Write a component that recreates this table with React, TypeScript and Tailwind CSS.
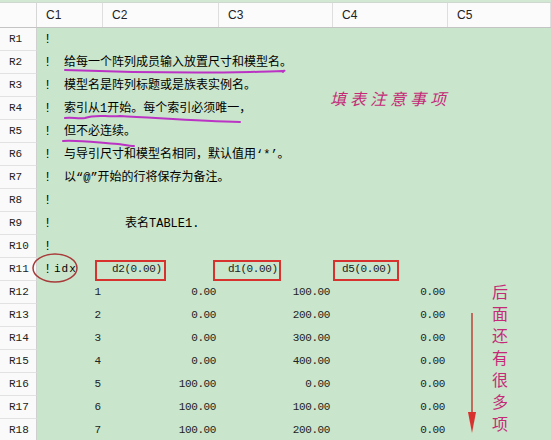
import React from "react";

const grid = "grid grid-cols-[37px_66px_116px_114px_115px_1fr]";
const cjk = "font-['Liberation_Mono','Noto_Sans_CJK_SC',monospace]";
const mono = "font-['Liberation_Mono',monospace]";
const cjkSans = "font-['Noto_Sans_CJK_SC',sans-serif]";

type Row = { note?: string; noteCls?: string; idx?: string; vals?: string[]; head?: boolean };

const rows: Row[] = [
  {},
  { note: "给每一个阵列成员输入放置尺寸和模型名。" },
  { note: "模型名是阵列标题或是族表实例名。" },
  { note: "索引从1开始。每个索引必须唯一，" },
  { note: "但不必连续。" },
  { note: "与导引尺寸和模型名相同，默认值用‘*’。" },
  { note: "以“@”开始的行将保存为备注。" },
  {},
  { note: "表名TABLE1.", noteCls: "left-[88px]" },
  {},
  { head: true },
  { idx: "1", vals: ["0.00", "100.00", "0.00"] },
  { idx: "2", vals: ["0.00", "200.00", "0.00"] },
  { idx: "3", vals: ["0.00", "300.00", "0.00"] },
  { idx: "4", vals: ["0.00", "400.00", "0.00"] },
  { idx: "5", vals: ["100.00", "0.00", "0.00"] },
  { idx: "6", vals: ["100.00", "100.00", "0.00"] },
  { idx: "7", vals: ["100.00", "200.00", "0.00"] },
];

const heads = ["d2(0.00)", "d1(0.00)", "d5(0.00)"];

function DataRow({ row, n }: { row: Row; n: number }) {
  const bang = row.idx === undefined;
  return (
    <div className={`${grid} h-[23px]`}>
      <div className={`flex items-center pl-[9px] text-[11px] text-[#222] bg-[#fafafa] border-b border-b-[#e2e2e2] border-r border-r-[#cfcfcf] ${mono}`}>
        R{n}
      </div>
      {bang ? (
        <div className={`relative flex items-center pl-[7px] text-[12px] text-black whitespace-nowrap z-10 ${cjk}`}>
          <span className="w-[10px] shrink-0">!</span>
          {row.head && <span className="text-[11px] tracking-[1px]">idx</span>}
          {row.note && (
            <span className={`absolute top-[3px] ${row.noteCls ?? "left-[27px]"}`}>{row.note}</span>
          )}
        </div>
      ) : (
        <div className={`flex items-center justify-end pr-[2px] text-[11px] text-[#222] ${mono}`}>{row.idx}</div>
      )}
      {heads.map((h, i) =>
        row.head ? (
          <div key={i} className={`flex items-center pl-[9px] text-[11px] text-[#222] tracking-[-0.4px] ${mono}`}>
            {h}
          </div>
        ) : (
          <div key={i} className={`flex items-center justify-end pr-[3px] text-[11px] text-[#222] tracking-[-0.4px] ${mono}`}>
            {row.vals?.[i] ?? ""}
          </div>
        )
      )}
      <div />
    </div>
  );
}

export default function App() {
  return (
    <div className="relative w-[551px] h-[440px] overflow-hidden bg-[#c9e5cb]">
      {/* top strip */}
      <div className="h-[3px] bg-[#d3e8d3] border-b border-b-[#cfd8cf]" />
      {/* column header */}
      <div className={`${grid} h-[25px] bg-[#fbfbfb] border-b border-b-[#c4c4c4] text-[12px] text-[#222] font-['Liberation_Sans',sans-serif]`}>
        <div className="border-r border-r-[#d6d6d6]" />
        {["C1", "C2", "C3", "C4", "C5"].map((c) => (
          <div key={c} className="flex items-center pl-[9px] border-r border-r-[#dedede]">
            {c}
          </div>
        ))}
      </div>
      {/* body */}
      <div>
        {rows.map((r, i) => (
          <DataRow key={i} row={r} n={i + 1} />
        ))}
      </div>

      {/* hand drawn annotations */}
      <svg className="absolute inset-0 pointer-events-none z-20" width="551" height="440">
        <g stroke="#bb33c4" strokeWidth="2" fill="none" strokeLinecap="round">
          <path d="M65 70 C 120 72, 200 73, 250 72 S 280 70, 283 72" />
          <path d="M65 118 C 72 117, 78 119, 85 118 C 95 114, 105 117, 120 116 C 160 118, 200 121, 240 122" />
          <path d="M63 141 C 80 140, 100 143, 118 144 C 125 145, 130 146, 134 146" />
        </g>
        <ellipse cx="55" cy="268" rx="22" ry="14" stroke="#a83a3a" strokeWidth="1.5" fill="none" />
        <g stroke="#d8322e" strokeWidth="2" fill="none">
          <rect x="96" y="261" width="69" height="19" />
          <rect x="214" y="261" width="66" height="19" />
          <rect x="334" y="261" width="64" height="19" />
        </g>
        <line x1="472" y1="313" x2="472" y2="418" stroke="#b8453a" strokeWidth="1.5" />
        <polygon points="468,412 476,412 472,433" fill="#d8322e" />
      </svg>

      <div className={`absolute left-[330px] top-[86px] z-20 text-[16px] tracking-[4px] text-[#c42a78] italic ${cjkSans}`}>
        填表注意事项
      </div>
      <div className={`absolute left-[492px] top-[280px] z-20 flex flex-col text-[16px] leading-[22px] text-[#c42a78] ${cjkSans}`}>
        {"后面还有很多项".split("").map((ch, i) => (
          <span key={i}>{ch}</span>
        ))}
      </div>
    </div>
  );
}
